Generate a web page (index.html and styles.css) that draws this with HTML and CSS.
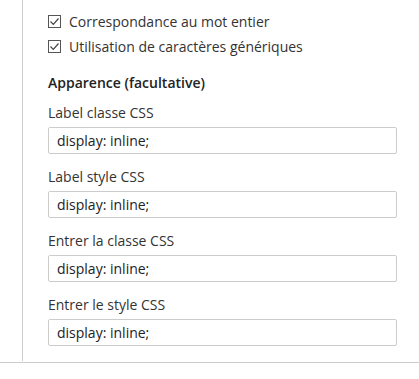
FILE: index.html
```html
<!DOCTYPE html>
<html lang="fr">
<head>
<meta charset="UTF-8">
<title>Options de recherche</title>
<link rel="stylesheet" href="styles.css">
</head>
<body>

  <div class="panel">
    <label class="check">
      <span class="box"><svg width="11" height="11" viewBox="0 0 11 11"><path d="M1.5 5.5 L4.3 8.3 L9.5 2.5" fill="none" stroke="#444" stroke-width="1.2"/></svg></span>
      Correspondance au mot entier
    </label>
    <label class="check">
      <span class="box"><svg width="11" height="11" viewBox="0 0 11 11"><path d="M1.5 5.5 L4.3 8.3 L9.5 2.5" fill="none" stroke="#444" stroke-width="1.2"/></svg></span>
      Utilisation de caractères génériques
    </label>

    <h3 class="section">Apparence (facultative)</h3>

    <div class="field">
      <label>Label classe CSS</label>
      <input type="text" value="display: inline;">
    </div>
    <div class="field">
      <label>Label style CSS</label>
      <input type="text" value="display: inline;">
    </div>
    <div class="field">
      <label>Entrer la classe CSS</label>
      <input type="text" value="display: inline;">
    </div>
    <div class="field">
      <label>Entrer le style CSS</label>
      <input type="text" value="display: inline;">
    </div>
  </div>
  <div class="rule"></div>

</body>
</html>
```

FILE: styles.css
```css
body{
  margin:0;
  background:#fff;
  font-family:"Open Sans", "Liberation Sans", sans-serif;
  font-size:14px;
  color:#333;
}
div.panel{
  margin-left:22px;
  border-left:1px solid #ccc;
  padding:11px 22px 15px 25px;
}
label.check{
  display:flex;
  align-items:center;
  height:20px;
  margin-bottom:5px;
  gap:8px;
}
span.box{
  display:flex;
  align-items:center;
  justify-content:center;
  width:11px;
  height:11px;
  border:1px solid #555;
  background:#fff;
}
h3.section{
  margin:17px 0 10px 0;
  font-size:14px;
  line-height:20px;
  font-weight:600;
  color:#222;
}
div.field{
  margin-bottom:13px;
}
div.field:last-child{ margin-bottom:0; }
div.field label{
  display:block;
  line-height:20px;
  margin-bottom:4px;
  color:#333;
}
div.field input{
  display:block;
  box-sizing:border-box;
  width:100%;
  height:27px;
  padding:0 8px;
  border:1px solid #ccc;
  border-radius:2px;
  font-family:inherit;
  font-size:14px;
  color:#222;
}
div.rule{
  border-top:1px solid #ccc;
  margin-top:1px;
}
```
